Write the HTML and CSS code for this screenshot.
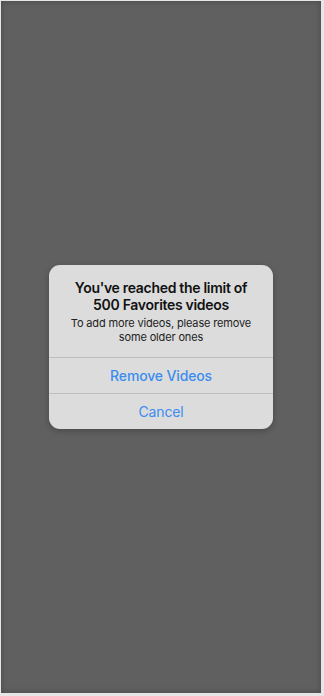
FILE: index.html
```html
<!DOCTYPE html>
<html lang="en">
<head>
<meta charset="utf-8">
<title>Favorites limit</title>
<link rel="stylesheet" href="styles.css">
</head>
<body>
<div class="screen">
  <div class="alert" role="alertdialog">
    <div class="alert-body">
      <div class="alert-title">You've reached the limit of 500 Favorites videos</div>
      <div class="alert-message">To add more videos, please remove some older ones</div>
    </div>
    <button class="alert-btn alert-btn-primary">Remove Videos</button>
    <button class="alert-btn">Cancel</button>
  </div>
</div>
</body>
</html>
```

FILE: styles.css
```css
html, body {
  margin: 0;
  padding: 0;
}
body {
  width: 324px;
  height: 696px;
  background: #e6e6e6;
  font-family: Inter, "Noto Sans", sans-serif;
  overflow: hidden;
}
.screen {
  box-sizing: border-box;
  margin: 1px 0 0 1px;
  width: 320px;
  height: 692px;
  background: #606060;
  box-shadow: inset 0 0 6px rgba(0, 0, 0, 0.25);
  display: flex;
  align-items: center;
  justify-content: center;
}
.alert {
  width: 224px;
  background: #dcdcdc;
  border-radius: 11px;
  display: flex;
  flex-direction: column;
  overflow: hidden;
  box-shadow: 0 2px 6px rgba(0, 0, 0, 0.25);
}
.alert-body {
  padding: 14px 14px 13px;
  text-align: center;
  display: flex;
  flex-direction: column;
  gap: 3px;
}
.alert-title {
  font-size: 14px;
  line-height: 17px;
  font-weight: 600;
  letter-spacing: -0.3px;
  color: #111;
}
.alert-message {
  font-size: 11px;
  line-height: 14px;
  color: #222;
  letter-spacing: -0.15px;
}
.alert-btn {
  display: block;
  width: 100%;
  height: 36px;
  margin: 0;
  padding: 0;
  border: 0;
  border-top: 1px solid #bdbdbd;
  background: transparent;
  font-family: inherit;
  font-size: 14px;
  letter-spacing: -0.15px;
  color: #3b8cf0;
  text-align: center;
}
.alert-btn-primary {
  font-weight: 500;
}
```
